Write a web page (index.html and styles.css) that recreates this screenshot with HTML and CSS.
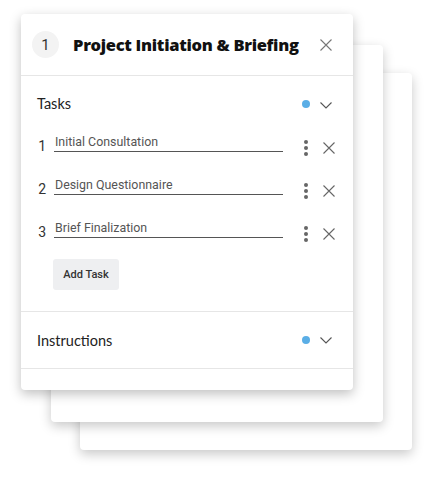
FILE: index.html
```html
<!DOCTYPE html>
<html lang="en">
<head>
    <meta charset="UTF-8">
    <meta name="viewport" content="width=device-width, initial-scale=1.0">
    <title>Project Phase</title>
    <link rel="stylesheet" href="styles.css">
</head>
<body>

    <div class="stack">
        <div class="sheet sheet-back"></div>
        <div class="sheet sheet-middle"></div>

        <div class="card">
            <div class="card-header">
                <span class="step-number">1</span>
                <h1>Project Initiation &amp; Briefing</h1>
                <button class="icon-button close-button" aria-label="Close">
                    <svg width="12" height="12" viewBox="0 0 12 12"><path d="M0.5 0.5L11.5 11.5M11.5 0.5L0.5 11.5" stroke="#777" stroke-width="1.1" fill="none"/></svg>
                </button>
            </div>

            <div class="section section-open">
                <div class="section-head">
                    <span class="section-title">Tasks</span>
                    <span class="dot"></span>
                    <svg class="chevron" width="12" height="7" viewBox="0 0 12 7"><path d="M0.5 0.5L6 6L11.5 0.5" stroke="#555" stroke-width="1.1" fill="none"/></svg>
                </div>

                <ol class="task-list">
                    <li class="task">
                        <span class="task-number">1</span>
                        <input class="task-input" type="text" value="Initial Consultation">
                        <span class="kebab"><i></i><i></i><i></i></span>
                        <svg class="remove" width="12" height="12" viewBox="0 0 12 12"><path d="M0.5 0.5L11.5 11.5M11.5 0.5L0.5 11.5" stroke="#666" stroke-width="1.1" fill="none"/></svg>
                    </li>
                    <li class="task">
                        <span class="task-number">2</span>
                        <input class="task-input" type="text" value="Design Questionnaire">
                        <span class="kebab"><i></i><i></i><i></i></span>
                        <svg class="remove" width="12" height="12" viewBox="0 0 12 12"><path d="M0.5 0.5L11.5 11.5M11.5 0.5L0.5 11.5" stroke="#666" stroke-width="1.1" fill="none"/></svg>
                    </li>
                    <li class="task">
                        <span class="task-number">3</span>
                        <input class="task-input" type="text" value="Brief Finalization">
                        <span class="kebab"><i></i><i></i><i></i></span>
                        <svg class="remove" width="12" height="12" viewBox="0 0 12 12"><path d="M0.5 0.5L11.5 11.5M11.5 0.5L0.5 11.5" stroke="#666" stroke-width="1.1" fill="none"/></svg>
                    </li>
                </ol>

                <button class="add-task">Add Task</button>
            </div>

            <div class="section">
                <div class="section-head">
                    <span class="section-title">Instructions</span>
                    <span class="dot"></span>
                    <svg class="chevron" width="12" height="7" viewBox="0 0 12 7"><path d="M0.5 0.5L6 6L11.5 0.5" stroke="#555" stroke-width="1.1" fill="none"/></svg>
                </div>
            </div>

            <div class="card-foot"></div>
        </div>
    </div>

</body>
</html>
```

FILE: styles.css
```css
body {
    font-family: "Lato", "Noto Sans", sans-serif;
    background-color: #ffffff;
    margin: 0;
    padding: 0;
}

.stack {
    position: relative;
    width: 433px;
    height: 478px;
}

.sheet {
    position: absolute;
    width: 332px;
    height: 377px;
    background-color: white;
    border-radius: 4px;
    box-shadow: 0 4px 12px rgba(0, 0, 0, 0.22);
}

.sheet-middle {
    left: 51px;
    top: 45px;
}

.sheet-back {
    left: 80px;
    top: 73px;
}

.card {
    position: absolute;
    left: 21px;
    top: 14px;
    width: 332px;
    height: 376px;
    background-color: white;
    border-radius: 4px;
    box-shadow: 0 4px 12px rgba(0, 0, 0, 0.25);
    display: flex;
    flex-direction: column;
}

.card-header {
    display: flex;
    align-items: center;
    height: 61px;
    padding: 0 21px 0 11px;
    border-bottom: 1px solid #e6e6e6;
}

.step-number {
    width: 27px;
    height: 27px;
    border-radius: 50%;
    background-color: #f3f3f3;
    display: flex;
    align-items: center;
    justify-content: center;
    font-family: "Roboto", sans-serif;
    font-size: 15px;
    color: #333;
}

h1 {
    flex: 1;
    margin: 0 0 0 14px;
    font-family: "Open Sans", sans-serif;
    font-size: 16.5px;
    font-weight: 800;
    color: #111;
    letter-spacing: -0.3px;
}

.icon-button {
    background: none;
    border: none;
    padding: 0;
    display: flex;
    cursor: pointer;
}

.section {
    border-bottom: 1px solid #e6e6e6;
    padding: 0 18px 0 16px;
}

.section-head {
    display: flex;
    align-items: center;
    height: 56px;
    padding-right: 3px;
}

.section-open {
    padding-bottom: 21px;
}

.section-open .section-head {
    align-items: flex-start;
    height: 28px;
    padding-top: 17px;
    line-height: 22px;
}

.section-open .dot {
    margin-top: 7px;
}

.section-open .chevron {
    margin-top: 9px;
}

.section-title {
    flex: 1;
    font-size: 14.5px;
    color: #222;
}

.dot {
    width: 8px;
    height: 8px;
    border-radius: 50%;
    background-color: #5aaee6;
    margin-right: 10px;
}

.task-list {
    list-style: none;
    margin: 0;
    padding: 0;
}

.task {
    display: flex;
    align-items: center;
    height: 43px;
    font-family: "Roboto", sans-serif;
}

.task-number {
    flex-shrink: 0;
    width: 9px;
    text-align: right;
    font-size: 14px;
    color: #333;
    margin-top: 6px;
}

.task-input {
    flex-shrink: 0;
    width: 228px;
    margin-left: 8px;
    border: none;
    border-bottom: 1.5px solid #555;
    padding: 0 0 2px 1px;
    font-family: "Roboto", sans-serif;
    font-size: 12.4px;
    color: #555;
    outline: none;
}

.kebab {
    display: flex;
    flex-direction: column;
    gap: 2px;
    margin-left: 21px;
    margin-top: 10px;
}

.kebab i {
    width: 4px;
    height: 4px;
    border-radius: 50%;
    background-color: #666;
}

.remove {
    flex-shrink: 0;
    margin-left: 15px;
    margin-top: 10px;
}

.add-task {
    margin: 9px 0 0 16px;
    width: 66px;
    height: 31px;
    background-color: #eeeff1;
    border: none;
    border-radius: 3px;
    font-family: "Roboto", sans-serif;
    font-size: 11px;
    font-weight: 500;
    color: #333;
    cursor: pointer;
}

.card-foot {
    flex: 1;
}
```
